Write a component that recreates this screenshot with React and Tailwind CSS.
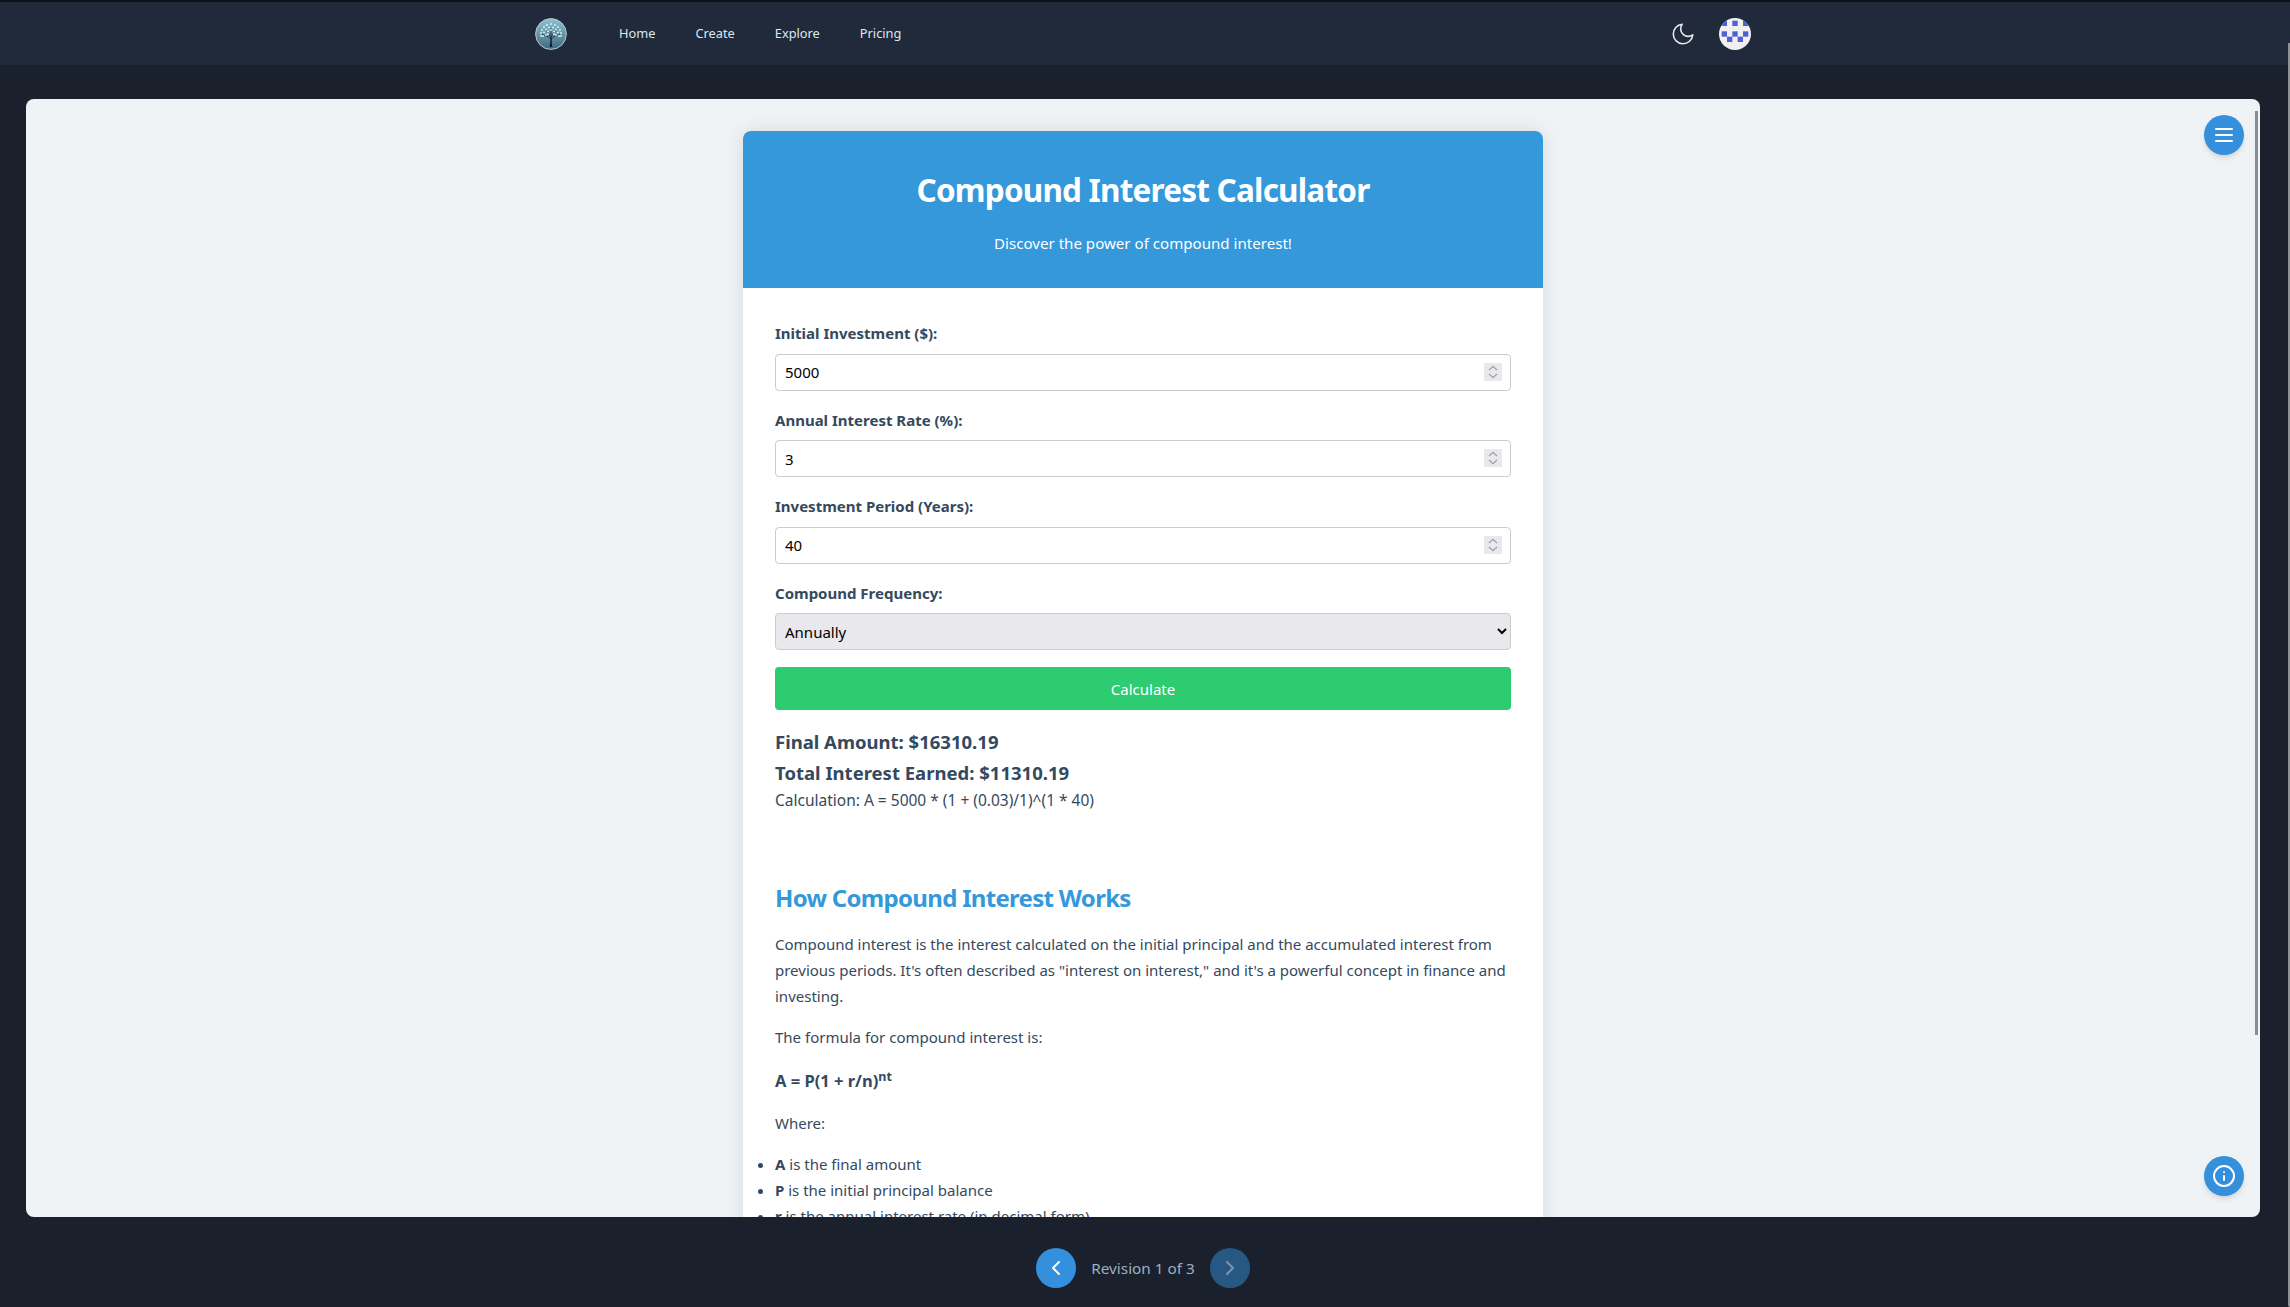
import React from "react";

const font = { fontFamily: '"Noto Sans", "Open Sans", sans-serif' };

function Logo() {
  const dots = [
    [16,6],[12,7],[20,7],[9,9],[23,9],[14,9.5],[18,9.5],[7,12],[25,12],[11,11.5],[21,11.5],[16,12],
    [13,13.5],[19,13.5],[6,15],[26,15],[9,14.5],[23,14.5],[8,18],[24,18],[11,17],[21,17],[6,18],[26,18],[13,16],[19,16],
  ];
  return (
    <svg width="32" height="32" viewBox="0 0 32 32">
      <defs>
        <linearGradient id="lg" x1="0" y1="0" x2="0" y2="1">
          <stop offset="0" stopColor="#8ec3d2" />
          <stop offset="1" stopColor="#3f6a80" />
        </linearGradient>
      </defs>
      <circle cx="16" cy="16" r="15.4" fill="url(#lg)" stroke="#b9c6cd" strokeWidth="1" />
      <path d="M14.6 29 C15.4 25 15.4 22 15.2 19.5 L16.8 19.5 C16.6 22 16.6 25 17.4 29 Z" fill="#0f1f30" />
      <path d="M16 21 C13 18 10 18 7 16 M16 21 C19 18 22 18 25 16 M15.5 19 C14 15 12 13 10 11 M16.5 19 C18 15 20 13 22 11 M16 20 L16 10" stroke="#14263a" strokeWidth="0.8" fill="none" />
      {dots.map(([x, y], i) => (
        <circle key={i} cx={x} cy={y} r="0.95" fill="#dff1f6" />
      ))}
    </svg>
  );
}

function Avatar() {
  const cells = [[0,0],[2,0],[4,0],[0,2],[2,2],[4,2],[1,3],[3,3]];
  return (
    <svg width="32" height="32" viewBox="0 0 32 32" className="rounded-full bg-[#f0f0f0]">
      {cells.map(([c, r], i) => (
        <rect key={i} x={2.67 + c * 5.33} y={2.67 + r * 5.33} width="5.33" height="5.33" fill="#4f5fd6" />
      ))}
    </svg>
  );
}

function Moon() {
  return (
    <svg width="26" height="26" viewBox="0 0 24 24" fill="none" stroke="#e5e7eb" strokeWidth="1.5" strokeLinecap="round" strokeLinejoin="round">
      <path d="M21 12.79A9 9 0 1 1 11.21 3 7 7 0 0 0 21 12.79z" />
    </svg>
  );
}

function NumberField({ label, value }) {
  return (
    <div className="mb-4">
      <label className="block pt-px mb-[7px] font-bold text-[15px] leading-[25.6px] text-[#34495e]">{label}</label>
      <div className="relative">
        <input
          type="number"
          defaultValue={value}
          className="block w-full h-[37px] pl-[9px] pr-2 border border-[#cccccc] rounded bg-white text-black text-[15px] [&::-webkit-inner-spin-button]:appearance-none"
        />
        <span className="absolute right-[9px] top-[9px] w-[18px] h-[18px] bg-[#e8e8ed]">
          <svg width="18" height="18" viewBox="0 0 18 18" fill="none" stroke="#9c9ca8" strokeWidth="1.2">
            <path d="M5 7l4-3.6L13 7M5 11l4 3.6L13 11" />
          </svg>
        </span>
      </div>
    </div>
  );
}

export default function App() {
  return (
    <div style={font} className="relative h-[1307px] flex flex-col bg-[#1a202c] overflow-hidden">
      <nav className="h-[65px] shrink-0 bg-[#202a3a] border-t-2 border-[#0e1116] flex items-center pl-[535px] pr-[539px]">
        <Logo />
        <div className="flex items-center ml-[52px] gap-[40px] text-[12.8px] text-[#dbe7f3]">
          <span>Home</span>
          <span>Create</span>
          <span>Explore</span>
          <span>Pricing</span>
        </div>
        <div className="ml-auto flex items-center gap-[23px]">
          <Moon />
          <Avatar />
        </div>
      </nav>

      <main className="flex-1 min-h-0 pt-[34px] pl-[26px] pr-[30px]">
        <div className="relative h-full rounded-lg overflow-hidden bg-[#eff3f6]">
          <div className="h-full overflow-hidden pt-8">
            <div className="w-[800px] mx-auto bg-white rounded-lg shadow-[0_0_20px_rgba(0,0,0,0.1)] text-[#2c3e50] leading-[1.6]">
              <header className="h-[157px] bg-[#3498db] rounded-t-lg text-white text-center pt-[34px]">
                <h1 className="text-[31.5px] font-bold leading-[1.6] tracking-[-0.8px]">Compound Interest Calculator</h1>
                <p className="mt-[16px] text-[15.1px]">Discover the power of compound interest!</p>
              </header>
              <div className="px-8 pt-[32px]">
                <NumberField label="Initial Investment ($):" value="5000" />
                <NumberField label="Annual Interest Rate (%):" value="3" />
                <NumberField label="Investment Period (Years):" value="40" />
                <div className="mb-[17px]">
                  <label className="block pt-px mb-[7px] font-bold text-[15px] leading-[25.6px] text-[#34495e]">Compound Frequency:</label>
                  <select className="block w-full h-[37px] px-[5px] border border-[#cccccc] rounded bg-[#e8e8ed] text-black text-[15px]">
                    <option>Annually</option>
                    <option>Semi-Annually</option>
                    <option>Quarterly</option>
                    <option>Monthly</option>
                  </select>
                </div>
                <button className="block w-full h-[43px] rounded bg-[#2ecc71] text-white text-[15px]">Calculate</button>
                <div className="mt-[16px] text-[#34495e]">
                  <p className="text-[18.5px] font-bold leading-[31px]">Final Amount: $16310.19</p>
                  <p className="text-[18.5px] font-bold leading-[31px]">Total Interest Earned: $11310.19</p>
                  <p className="text-[15.5px] leading-[25px]">Calculation: A = 5000 * (1 + (0.03)/1)^(1 * 40)</p>
                </div>
                <section className="mt-[66px] text-[15px] text-[#34495e] leading-[26px]">
                  <h2 className="text-2xl font-bold text-[#3498db] leading-[38px] tracking-[-0.7px]">How Compound Interest Works</h2>
                  <p className="mt-[14px]">Compound interest is the interest calculated on the initial principal and the accumulated interest from previous periods. It's often described as "interest on interest," and it's a powerful concept in finance and investing.</p>
                  <p className="mt-[15px]">The formula for compound interest is:</p>
                  <p className="mt-[18px] font-bold text-[16.5px]">A = P(1 + r/n)<sup className="text-[12.5px]">nt</sup></p>
                  <p className="mt-[16px]">Where:</p>
                  <ul className="mt-[15px] list-disc">
                    <li><strong>A</strong> is the final amount</li>
                    <li><strong>P</strong> is the initial principal balance</li>
                    <li><strong>r</strong> is the annual interest rate (in decimal form)</li>
                  </ul>
                </section>
              </div>
            </div>
          </div>
          <div className="absolute right-[2px] top-[12px] w-[3px] h-[924px] bg-[#8a8d90]" />
          <button className="absolute top-4 right-[16px] w-10 h-10 rounded-full bg-[#3490dc] shadow-md flex items-center justify-center">
            <svg width="24" height="24" viewBox="0 0 24 24" fill="none" stroke="white" strokeWidth="2" strokeLinecap="round"><path d="M4 6h16M4 12h16M4 18h16" /></svg>
          </button>
          <button className="absolute bottom-[21px] right-[16px] w-10 h-10 rounded-full bg-[#3490dc] shadow-md flex items-center justify-center">
            <svg width="24" height="24" viewBox="0 0 24 24" fill="none" stroke="white" strokeWidth="2" strokeLinecap="round"><circle cx="12" cy="12" r="10" /><path d="M12 16v-4M12 8h.01" /></svg>
          </button>
        </div>
      </main>

      <footer className="h-[90px] shrink-0 flex items-center justify-center gap-[15px] pt-[12px] pr-[4px]">
        <button className="w-10 h-10 rounded-full bg-[#3490dc] flex items-center justify-center">
          <svg width="24" height="24" viewBox="0 0 24 24" fill="none" stroke="white" strokeWidth="2" strokeLinecap="round" strokeLinejoin="round"><path d="M15 18l-6-6 6-6" /></svg>
        </button>
        <span className="text-[15.3px] text-[#a0aec0]">Revision 1 of 3</span>
        <button className="w-10 h-10 rounded-full bg-[#3490dc]/50 flex items-center justify-center">
          <svg width="24" height="24" viewBox="0 0 24 24" fill="none" stroke="#7f93a8" strokeWidth="2" strokeLinecap="round" strokeLinejoin="round"><path d="M9 18l6-6-6-6" /></svg>
        </button>
      </footer>
      <div className="absolute right-0 top-[43px] bottom-0 w-[2px] rounded-bl bg-[#8f9295]" />
    </div>
  );
}
